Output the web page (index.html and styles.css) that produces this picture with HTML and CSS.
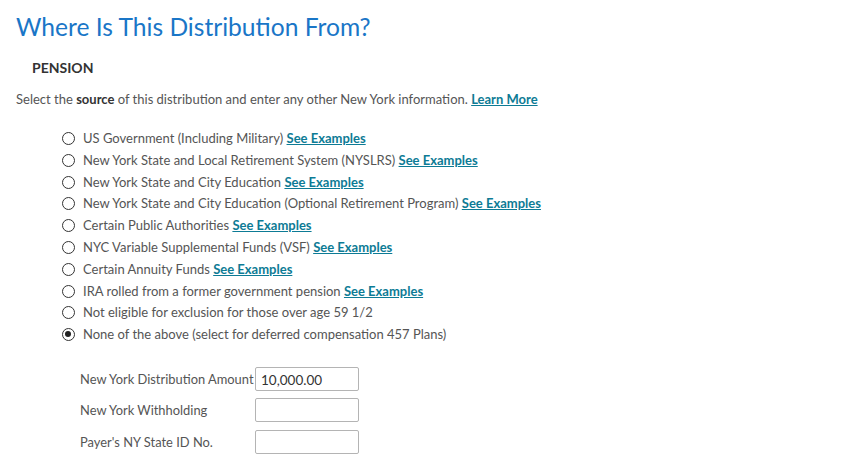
FILE: index.html
```html
<!DOCTYPE html>
<html lang="en">
<head>
    <meta charset="UTF-8">
    <meta name="viewport" content="width=device-width, initial-scale=1.0">
    <title>Where Is This Distribution From?</title>
    <link rel="stylesheet" href="styles.css">
</head>
<body>
    <h1>Where Is This Distribution From?</h1>
    <h2>PENSION</h2>
    <p class="intro">Select the <b>source</b> of this distribution and enter any other New York information. <a href="#">Learn More</a></p>

    <form class="sources">
        <label class="option"><input type="radio" name="source">US Government (Including Military) <a href="#">See Examples</a></label>
        <label class="option"><input type="radio" name="source">New York State and Local Retirement System (NYSLRS) <a href="#">See Examples</a></label>
        <label class="option"><input type="radio" name="source">New York State and City Education <a href="#">See Examples</a></label>
        <label class="option"><input type="radio" name="source">New York State and City Education (Optional Retirement Program) <a href="#">See Examples</a></label>
        <label class="option"><input type="radio" name="source">Certain Public Authorities <a href="#">See Examples</a></label>
        <label class="option"><input type="radio" name="source">NYC Variable Supplemental Funds (VSF) <a href="#">See Examples</a></label>
        <label class="option"><input type="radio" name="source">Certain Annuity Funds <a href="#">See Examples</a></label>
        <label class="option"><input type="radio" name="source">IRA rolled from a former government pension <a href="#">See Examples</a></label>
        <label class="option"><input type="radio" name="source">Not eligible for exclusion for those over age 59 1/2</label>
        <label class="option"><input type="radio" name="source" checked>None of the above (select for deferred compensation 457 Plans)</label>

        <div class="fields">
            <div class="field">
                <label for="amount">New York Distribution Amount</label>
                <input type="text" id="amount" value="10,000.00">
            </div>
            <div class="field">
                <label for="withholding">New York Withholding</label>
                <input type="text" id="withholding">
            </div>
            <div class="field">
                <label for="stateid">Payer's NY State ID No.</label>
                <input type="text" id="stateid">
            </div>
        </div>
    </form>
</body>
</html>
```

FILE: styles.css
```css
body {
    font-family: Lato, "Noto Sans", sans-serif;
    margin: 0;
    padding: 0 16px;
    color: #555;
    background: #fff;
}
h1 {
    font-weight: 400;
    font-size: 24.6px;
    color: #1a76c7;
    margin: 11px 0 0;
    line-height: 32px;
}
h2 {
    font-size: 14px;
    font-weight: 700;
    color: #333;
    margin: 16px 0 0 16px;
    line-height: 18px;
}
.intro {
    font-size: 13px;
    margin: 14px 0 0;
    line-height: 16px;
}
.intro b {
    color: #333;
}
a {
    color: #0d7b95;
    font-weight: 700;
    text-decoration: underline;
}
.sources {
    margin-top: 21px;
    padding-left: 46px;
}
.option {
    display: block;
    height: 21.8px;
    line-height: 21.8px;
    font-size: 13px;
    white-space: nowrap;
}
.option input {
    appearance: none;
    width: 13px;
    height: 13px;
    margin: 0 8px 0 0;
    border: 1.5px solid #333;
    border-radius: 50%;
    box-sizing: border-box;
    vertical-align: -2px;
    position: relative;
}
.option input:checked::after {
    content: "";
    position: absolute;
    left: 2px;
    top: 2px;
    width: 6px;
    height: 6px;
    border-radius: 50%;
    background: #222;
}
.fields {
    margin-top: 21px;
    padding-left: 18px;
    display: flex;
    flex-direction: column;
    gap: 7.5px;
}
.field {
    display: flex;
    align-items: center;
}
.field label {
    width: 175px;
    font-size: 12.9px;
}
.field input {
    width: 104px;
    height: 24px;
    box-sizing: border-box;
    border: 1px solid #b4b4b4;
    border-radius: 2px;
    padding: 2px 5px 0;
    font-family: inherit;
    font-size: 13.5px;
    color: #333;
}
```
